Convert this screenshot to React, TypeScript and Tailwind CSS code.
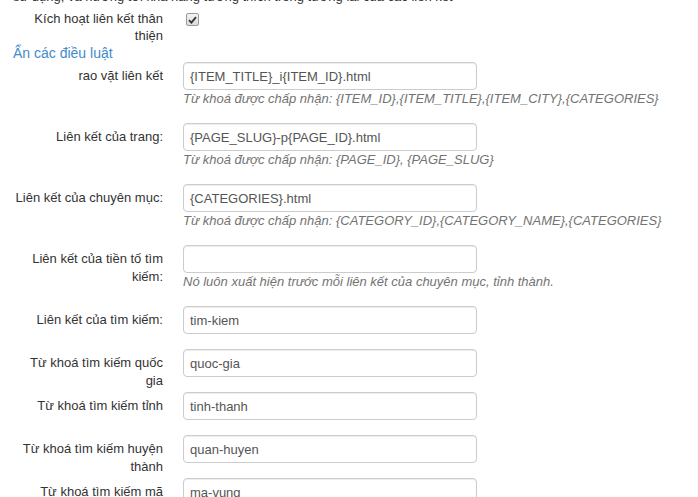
import React from "react";

type Field = {
  label: string;
  value: string;
  help?: string;
};

const FIELDS: Field[] = [
  {
    label: "rao vặt liên kết",
    value: "{ITEM_TITLE}_i{ITEM_ID}.html",
    help: "Từ khoá được chấp nhận: {ITEM_ID},{ITEM_TITLE},{ITEM_CITY},{CATEGORIES}",
  },
  {
    label: "Liên kết của trang:",
    value: "{PAGE_SLUG}-p{PAGE_ID}.html",
    help: "Từ khoá được chấp nhận: {PAGE_ID}, {PAGE_SLUG}",
  },
  {
    label: "Liên kết của chuyên mục:",
    value: "{CATEGORIES}.html",
    help: "Từ khoá được chấp nhận: {CATEGORY_ID},{CATEGORY_NAME},{CATEGORIES}",
  },
  {
    label: "Liên kết của tiền tố tìm kiếm:",
    value: "",
    help: "Nó luôn xuất hiện trước mỗi liên kết của chuyên mục, tỉnh thành.",
  },
  { label: "Liên kết của tìm kiếm:", value: "tim-kiem" },
  { label: "Từ khoá tìm kiếm quốc gia", value: "quoc-gia" },
  { label: "Từ khoá tìm kiếm tỉnh", value: "tinh-thanh" },
  { label: "Từ khoá tìm kiếm huyện thành", value: "quan-huyen" },
  { label: "Từ khoá tìm kiếm mã vùng", value: "ma-vung" },
];

function FormRow({ field }: { field: Field }) {
  return (
    <div className="mb-[15px] flex items-start">
      <label className="ml-[13px] h-[28px] w-[150px] shrink-0 pt-[5px] text-right leading-[18px] text-[#333]">
        {field.label}
      </label>
      <div className="ml-[20px] w-[294px] shrink-0">
        <input
          type="text"
          readOnly
          value={field.value}
          className="block h-[28px] w-full rounded-[4px] border border-[#ccc] bg-white px-[6px] text-[13px] text-[#555] shadow-[inset_0_1px_1px_rgba(0,0,0,0.075)] outline-none"
        />
        {field.help && (
          <p className="whitespace-nowrap leading-[18px] text-[#737373] italic">{field.help}</p>
        )}
      </div>
    </div>
  );
}

export default function App() {
  return (
    <div className="h-[497px] overflow-hidden bg-white font-['Liberation_Sans',Arial,sans-serif] text-[13px]">
      <p className="-mt-[12px] ml-[13px] whitespace-nowrap leading-[18px] text-[#333]">
        sử dụng, và hướng tới khả năng tương thích trong tương lai của các liên kết
      </p>

      <div className="mt-[4px] flex items-start">
        <label className="ml-[13px] w-[150px] shrink-0 text-right leading-[17px] text-[#333]">
          Kích hoạt liên kết thân thiện
        </label>
        <div className="ml-[23px] mt-[3px] flex h-[13px] w-[13px] items-center justify-center rounded-[2px] border border-[#9a9a9a] bg-gradient-to-b from-[#f4f4f4] to-[#dadada]">
          <svg width="9" height="8" viewBox="0 0 9 8">
            <path d="M1 4.2 L3.4 6.6 L8 1.2" fill="none" stroke="#333" strokeWidth="1.8" />
          </svg>
        </div>
      </div>

      <a href="#" className="ml-[13px] block w-fit text-[14px] leading-[18px] text-[#428bca]">
        Ẩn các điều luật
      </a>

      <div>
        {FIELDS.map((f) => (
          <FormRow key={f.label} field={f} />
        ))}
      </div>
    </div>
  );
}
